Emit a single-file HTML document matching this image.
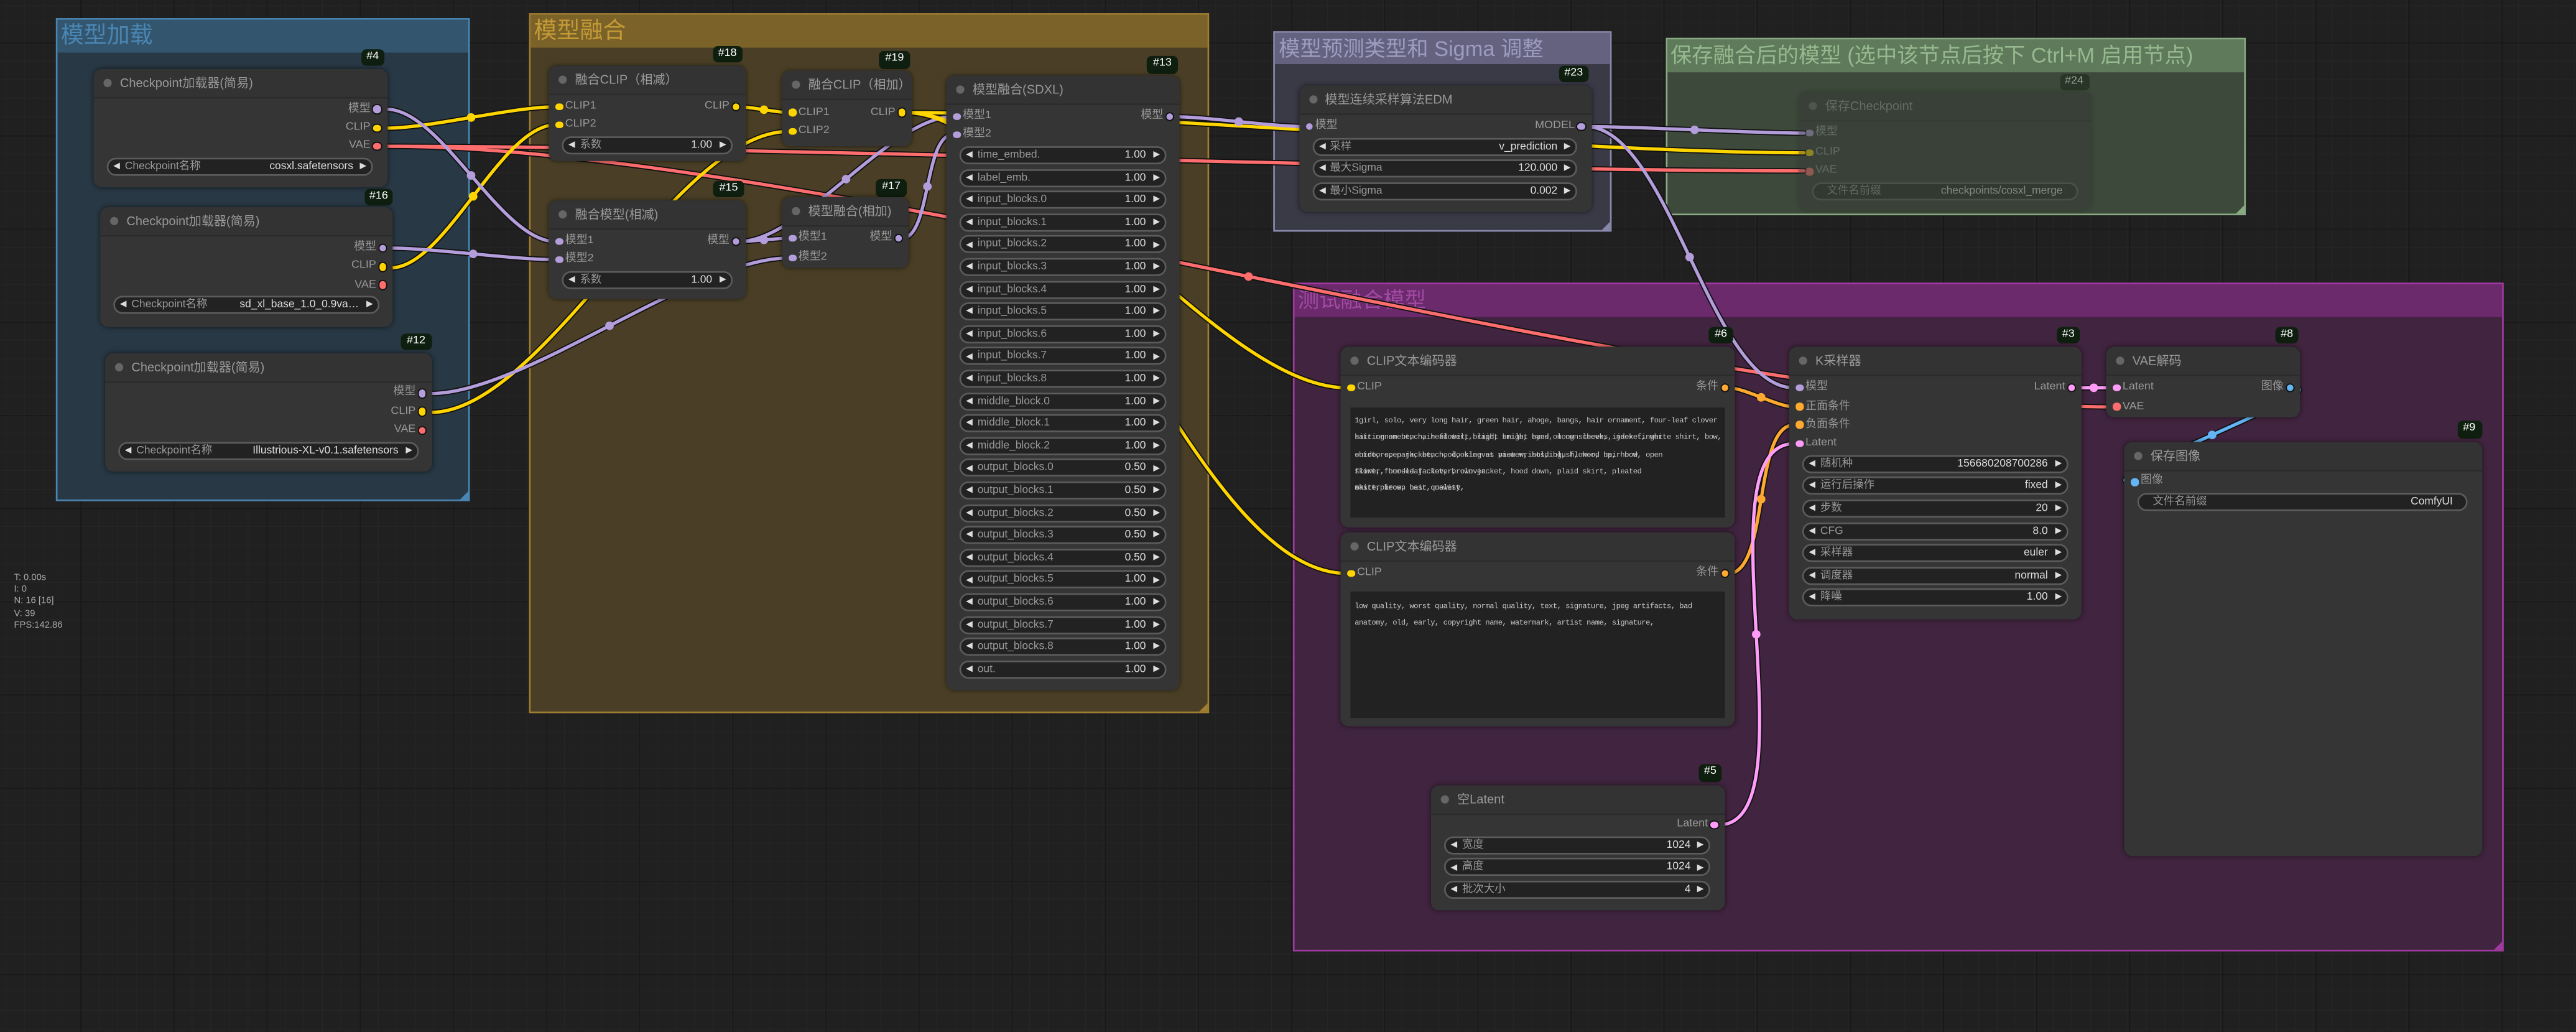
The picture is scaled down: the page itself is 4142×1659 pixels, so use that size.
<!DOCTYPE html>
<html><head><meta charset="utf-8">
<style>
html,body{margin:0;padding:0;width:4142px;height:1659px;overflow:hidden;background:#202020}
#s{position:absolute;left:0;top:0;width:1568px;height:628px;transform:scale(2.641582);transform-origin:0 0;font-family:"Liberation Sans","Noto Sans CJK SC",sans-serif;
background-color:#202020;
background-image:linear-gradient(#191919 .8px,transparent .8px),linear-gradient(90deg,#191919 .8px,transparent .8px),linear-gradient(#262626 .4px,transparent .4px),linear-gradient(90deg,#262626 .4px,transparent .4px);
background-size:56.7px 56.7px,56.7px 56.7px,11.34px 11.34px,11.34px 11.34px;background-position:48.8px 25.7px;}
.g{position:absolute;box-sizing:border-box;border:.7px solid}
.g .gh{position:absolute;left:0;right:0;top:0;height:19.5px}
.g .gt{position:absolute;left:2px;top:0;line-height:19.5px;font-size:14px;white-space:nowrap}
.g .tri{position:absolute;right:0;bottom:0;width:0;height:0;border-left:5px solid transparent;border-bottom:5px solid}
.n{position:absolute;background:#353535;border-radius:5px;box-shadow:0 0 3px rgba(0,0,0,.55)}
.n .h{position:absolute;left:0;right:0;top:0;height:17px;border-bottom:1px solid #2b2b2b;border-radius:5px 5px 0 0;background:#333}
.n .h:before{content:'';position:absolute;left:6px;top:6px;width:5px;height:5px;border-radius:50%;background:#666}
.n .h span{position:absolute;left:16px;top:0;line-height:17px;font-size:7.6px;color:#999;white-space:nowrap}
.sl{position:absolute;left:0;right:0;height:8px;font-size:6.8px;line-height:8px;color:#999;white-space:nowrap}
.sl b{position:absolute;top:1.75px;width:4.5px;height:4.5px;border-radius:50%}
.sl.i b{left:4px}.sl.i span{position:absolute;left:10px}
.sl.o b{right:4px;box-shadow:0 0 0 .7px #111}.sl.o span{position:absolute;right:10px}
.w{position:absolute;left:8px;right:8.5px;height:11px;box-sizing:border-box;background:#222;border:.6px solid #5c5c5c;border-radius:6px;font-size:6.6px;line-height:10px;color:#999;white-space:nowrap}
.w:before{content:'';position:absolute;left:3px;top:2.2px;border-right:4px solid #ddd;border-top:2.8px solid transparent;border-bottom:2.8px solid transparent}
.w:after{content:'';position:absolute;right:3px;top:2.2px;border-left:4px solid #ddd;border-top:2.8px solid transparent;border-bottom:2.8px solid transparent}
.w .l{position:absolute;left:10px}.w .v{position:absolute;right:11px;color:#ddd}
.w.ns:before,.w.ns:after{display:none}
.w.ns .l{left:8px}.w.ns .v{right:8px}
.b{position:absolute;background:#0f1f0f;color:#fff;font-size:6.8px;line-height:10.5px;height:10.5px;border-radius:3px;text-align:center}
.ta{position:absolute;left:5.6px;right:6px;background:#222;overflow:hidden}
.ta div{position:absolute;left:3px;font-family:"Liberation Mono",monospace;font-size:4.6px;letter-spacing:-.19px;color:#c8c8c8;white-space:nowrap}
.st{position:absolute;left:8.5px;font-size:5.6px;color:#a8a8a8;line-height:7.2px}
</style></head><body>
<div id="s">

<!-- groups -->
<div class="g" style="left:34px;top:11px;width:251.5px;height:294px;background:#283844;border-color:#4a86b4">
 <div class="gh" style="background:#33566e"></div><div class="gt" style="color:#4a86b4">模型加载</div><div class="tri" style="border-bottom-color:#4a86b4"></div></div>
<div class="g" style="left:322px;top:8.4px;width:414px;height:426px;background:#4a3f26;border-color:#a07e30">
 <div class="gh" style="background:#7a6229"></div><div class="gt" style="color:#c49a36">模型融合</div><div class="tri" style="border-bottom-color:#a07e30"></div></div>
<div class="g" style="left:775.4px;top:18.6px;width:205.5px;height:122.4px;background:#3a3a47;border-color:#8888aa">
 <div class="gh" style="background:#64627f"></div><div class="gt" style="color:#9d9cc0;font-size:13px">模型预测类型和 Sigma 调整</div><div class="tri" style="border-bottom-color:#8888aa"></div></div>
<div class="g" style="left:1013.8px;top:23.4px;width:353.5px;height:107.2px;background:#3d4a3b;border-color:#8aaa84">
 <div class="gh" style="background:#5e7a5a"></div><div class="gt" style="color:#96b98f;font-size:13px">保存融合后的模型 (选中该节点后按下 Ctrl+M 启用节点)</div><div class="tri" style="border-bottom-color:#8aaa84"></div></div>
<div class="g" style="left:787px;top:172px;width:737px;height:407px;background:#41243f;border-color:#a03aa0">
 <div class="gh" style="background:#6b2a6b"></div><div class="gt" style="color:#a04aa2;font-size:13px">测试融合模型</div><div class="tri" style="border-bottom-color:#a03aa0"></div></div>

<!-- links -->
<svg style="position:absolute;left:0;top:0" width="1568" height="628" viewBox="0 0 1568 628" fill="none">
<g stroke="#111" stroke-width="3.4" stroke-linecap="round">
<path d="M235.5,78 C261.5,78 312,65 338,65"/><path d="M238,163 C271,163 305,76 338,76"/>
<path d="M235.5,66.5 C268.5,66.5 305,147 338,147"/><path d="M238,151 C263,151 313,158 338,158"/>
<path d="M262,251 C331,251 411,80 480,80"/><path d="M262,239.5 C320,239.5 422,157 480,157"/>
<path d="M450,65 C457.5,65 472.5,68.5 480,68.5"/><path d="M450,147 C457.5,147 472.5,145 480,145"/>
<path d="M549,145 C566.5,145 562.5,82 580,82"/><path d="M450,147 C487.6,147 542.4,71 580,71"/>
<path d="M551,68.5 C688,68.5 961,93 1098,93"/><path d="M551,68.5 C630,68.5 741,236 820,236"/>
<path d="M551,68.5 C648,68.5 723,349 820,349"/><path d="M714,71 C734,71 774,77 794,77"/>
<path d="M965,77 C998,77 1065,81 1098,81"/><path d="M965,77 C1016,77 1041,236 1092,236"/>
<path d="M235.5,89 C451.5,89 882,104 1098,104"/><path d="M235.5,89 C500.5,89 1020,247.6 1285,247.6"/>
<path d="M1052,236 C1062,236 1082,247.6 1092,247.6"/><path d="M1052,349 C1077,349 1067,258.6 1092,258.6"/>
<path d="M1046,502 C1105,502 1033,270 1092,270"/><path d="M1263,236 C1270,236 1279,236 1286,236"/>
<path d="M1396,236 C1424.6,236 1268.4,293.4 1297,293.4"/>
</g>
<g stroke-width="2" stroke-linecap="round">
<path stroke="#ff6e6e" d="M235.5,89 C451.5,89 882,104 1098,104"/><path stroke="#ff6e6e" d="M235.5,89 C500.5,89 1020,247.6 1285,247.6"/>
<path stroke="#ffd500" d="M235.5,78 C261.5,78 312,65 338,65"/><path stroke="#ffd500" d="M238,163 C271,163 305,76 338,76"/>
<path stroke="#b39ddb" d="M235.5,66.5 C268.5,66.5 305,147 338,147"/><path stroke="#b39ddb" d="M238,151 C263,151 313,158 338,158"/>
<path stroke="#ffd500" d="M262,251 C331,251 411,80 480,80"/><path stroke="#b39ddb" d="M262,239.5 C320,239.5 422,157 480,157"/>
<path stroke="#ffd500" d="M450,65 C457.5,65 472.5,68.5 480,68.5"/><path stroke="#b39ddb" d="M450,147 C457.5,147 472.5,145 480,145"/>
<path stroke="#b39ddb" d="M549,145 C566.5,145 562.5,82 580,82"/><path stroke="#b39ddb" d="M450,147 C487.6,147 542.4,71 580,71"/>
<path stroke="#ffd500" d="M551,68.5 C688,68.5 961,93 1098,93"/><path stroke="#ffd500" d="M551,68.5 C630,68.5 741,236 820,236"/>
<path stroke="#ffd500" d="M551,68.5 C648,68.5 723,349 820,349"/><path stroke="#b39ddb" d="M714,71 C734,71 774,77 794,77"/>
<path stroke="#b39ddb" d="M965,77 C998,77 1065,81 1098,81"/><path stroke="#b39ddb" d="M965,77 C1016,77 1041,236 1092,236"/>
<path stroke="#ffa931" d="M1052,236 C1062,236 1082,247.6 1092,247.6"/><path stroke="#ffa931" d="M1052,349 C1077,349 1067,258.6 1092,258.6"/>
<path stroke="#ff9cf9" d="M1046,502 C1105,502 1033,270 1092,270"/><path stroke="#ff9cf9" d="M1263,236 C1270,236 1279,236 1286,236"/>
<path stroke="#64b5f6" d="M1396,236 C1424.6,236 1268.4,293.4 1297,293.4"/>
</g>
<g>
<circle cx="286.75" cy="71.5" r="2.6" fill="#ffd500"/><circle cx="288" cy="119.5" r="2.6" fill="#ffd500"/>
<circle cx="286.75" cy="106.75" r="2.6" fill="#b39ddb"/><circle cx="288" cy="154.5" r="2.6" fill="#b39ddb"/>
<circle cx="371" cy="165.5" r="2.6" fill="#ffd500"/><circle cx="371" cy="198.25" r="2.6" fill="#b39ddb"/>
<circle cx="465" cy="66.75" r="2.6" fill="#ffd500"/><circle cx="465" cy="146" r="2.6" fill="#b39ddb"/>
<circle cx="564.5" cy="113.5" r="2.6" fill="#b39ddb"/><circle cx="515" cy="109" r="2.6" fill="#b39ddb"/>
<circle cx="754" cy="74" r="2.6" fill="#b39ddb"/><circle cx="1031.5" cy="79" r="2.6" fill="#b39ddb"/>
<circle cx="1028.5" cy="156.5" r="2.6" fill="#b39ddb"/><circle cx="666.75" cy="96.5" r="2.6" fill="#ff6e6e"/>
<circle cx="760" cy="168.3" r="2.6" fill="#ff6e6e"/><circle cx="1072" cy="241.8" r="2.6" fill="#ffa931"/>
<circle cx="1072" cy="303.8" r="2.6" fill="#ffa931"/><circle cx="1069" cy="386" r="2.6" fill="#ff9cf9"/>
<circle cx="1274.5" cy="236" r="2.6" fill="#ff9cf9"/><circle cx="1346.5" cy="264.7" r="2.6" fill="#64b5f6"/>
</g>
</svg>

<!-- badges -->
<div class="b" style="left:219.6px;top:29.5px;width:14.5px">#4</div>
<div class="b" style="left:222px;top:114.5px;width:17px">#16</div>
<div class="b" style="left:244px;top:202.5px;width:18.5px">#12</div>
<div class="b" style="left:433.5px;top:27.5px;width:18.5px">#18</div>
<div class="b" style="left:535px;top:31px;width:19px">#19</div>
<div class="b" style="left:434px;top:109.5px;width:19px">#15</div>
<div class="b" style="left:533px;top:109px;width:19px">#17</div>
<div class="b" style="left:698px;top:34px;width:19px">#13</div>
<div class="b" style="left:948.6px;top:39.5px;width:18.5px">#23</div>
<div class="b" style="left:1253.5px;top:44.5px;width:18px;opacity:.45">#24</div>
<div class="b" style="left:1040px;top:198.5px;width:15px">#6</div>
<div class="b" style="left:1252px;top:198.7px;width:14px">#3</div>
<div class="b" style="left:1385px;top:198.7px;width:14px">#8</div>
<div class="b" style="left:1495.5px;top:256px;width:15px">#9</div>
<div class="b" style="left:1033.7px;top:465px;width:14.6px">#5</div>

<!-- #4 -->
<div class="n" style="left:57px;top:41.5px;width:178.5px;height:72.5px">
 <div class="h"><span>Checkpoint加载器(简易)</span></div>
 <div class="sl o" style="top:21px"><span>模型</span><b style="background:#b39ddb"></b></div>
 <div class="sl o" style="top:32.3px"><span>CLIP</span><b style="background:#ffd500"></b></div>
 <div class="sl o" style="top:43.6px"><span>VAE</span><b style="background:#ff6e6e"></b></div>
 <div class="w" style="top:54.3px"><span class="l">Checkpoint名称</span><span class="v">cosxl.safetensors</span></div>
</div>
<!-- #16 -->
<div class="n" style="left:61px;top:126px;width:178px;height:72.5px">
 <div class="h"><span>Checkpoint加载器(简易)</span></div>
 <div class="sl o" style="top:21px"><span>模型</span><b style="background:#b39ddb"></b></div>
 <div class="sl o" style="top:32.3px"><span>CLIP</span><b style="background:#ffd500"></b></div>
 <div class="sl o" style="top:43.6px"><span>VAE</span><b style="background:#ff6e6e"></b></div>
 <div class="w" style="top:54.3px"><span class="l">Checkpoint名称</span><span class="v">sd_xl_base_1.0_0.9va…</span></div>
</div>
<!-- #12 -->
<div class="n" style="left:64px;top:214.7px;width:199px;height:72.3px">
 <div class="h"><span>Checkpoint加载器(简易)</span></div>
 <div class="sl o" style="top:20.6px"><span>模型</span><b style="background:#b39ddb"></b></div>
 <div class="sl o" style="top:32px"><span>CLIP</span><b style="background:#ffd500"></b></div>
 <div class="sl o" style="top:43.3px"><span>VAE</span><b style="background:#ff6e6e"></b></div>
 <div class="w" style="top:54.3px"><span class="l">Checkpoint名称</span><span class="v">Illustrious-XL-v0.1.safetensors</span></div>
</div>

<!-- #18 -->
<div class="n" style="left:334px;top:40px;width:120px;height:58px">
 <div class="h"><span>融合CLIP（相减）</span></div>
 <div class="sl i" style="top:21px"><b style="background:#ffd500"></b><span>CLIP1</span></div>
 <div class="sl i" style="top:32px"><b style="background:#ffd500"></b><span>CLIP2</span></div>
 <div class="sl o" style="top:21px"><span>CLIP</span><b style="background:#ffd500"></b></div>
 <div class="w" style="top:42.5px"><span class="l">系数</span><span class="v">1.00</span></div>
</div>
<!-- #19 -->
<div class="n" style="left:476px;top:43px;width:79px;height:46px">
 <div class="h"><span>融合CLIP（相加）</span></div>
 <div class="sl i" style="top:21.5px"><b style="background:#ffd500"></b><span>CLIP1</span></div>
 <div class="sl i" style="top:33px"><b style="background:#ffd500"></b><span>CLIP2</span></div>
 <div class="sl o" style="top:21.5px"><span>CLIP</span><b style="background:#ffd500"></b></div>
</div>
<!-- #15 -->
<div class="n" style="left:334px;top:122px;width:120px;height:60px">
 <div class="h"><span>融合模型(相减)</span></div>
 <div class="sl i" style="top:21px"><b style="background:#b39ddb"></b><span>模型1</span></div>
 <div class="sl i" style="top:32px"><b style="background:#b39ddb"></b><span>模型2</span></div>
 <div class="sl o" style="top:21px"><span>模型</span><b style="background:#b39ddb"></b></div>
 <div class="w" style="top:42.5px"><span class="l">系数</span><span class="v">1.00</span></div>
</div>
<!-- #17 -->
<div class="n" style="left:476px;top:120px;width:77px;height:43px">
 <div class="h"><span>模型融合(相加)</span></div>
 <div class="sl i" style="top:21px"><b style="background:#b39ddb"></b><span>模型1</span></div>
 <div class="sl i" style="top:33px"><b style="background:#b39ddb"></b><span>模型2</span></div>
 <div class="sl o" style="top:21px"><span>模型</span><b style="background:#b39ddb"></b></div>
</div>
<!-- #13 -->
<div class="n" style="left:576px;top:46px;width:142px;height:374px">
 <div class="h"><span>模型融合(SDXL)</span></div>
 <div class="sl i" style="top:21px"><b style="background:#b39ddb"></b><span>模型1</span></div>
 <div class="sl i" style="top:32.2px"><b style="background:#b39ddb"></b><span>模型2</span></div>
 <div class="sl o" style="top:21px"><span>模型</span><b style="background:#b39ddb"></b></div>
 <div class="w" style="top:43px"><span class="l">time_embed.</span><span class="v">1.00</span></div>
 <div class="w" style="top:56.6px"><span class="l">label_emb.</span><span class="v">1.00</span></div>
 <div class="w" style="top:70.2px"><span class="l">input_blocks.0</span><span class="v">1.00</span></div>
 <div class="w" style="top:83.8px"><span class="l">input_blocks.1</span><span class="v">1.00</span></div>
 <div class="w" style="top:97.4px"><span class="l">input_blocks.2</span><span class="v">1.00</span></div>
 <div class="w" style="top:111px"><span class="l">input_blocks.3</span><span class="v">1.00</span></div>
 <div class="w" style="top:124.6px"><span class="l">input_blocks.4</span><span class="v">1.00</span></div>
 <div class="w" style="top:138.2px"><span class="l">input_blocks.5</span><span class="v">1.00</span></div>
 <div class="w" style="top:151.8px"><span class="l">input_blocks.6</span><span class="v">1.00</span></div>
 <div class="w" style="top:165.4px"><span class="l">input_blocks.7</span><span class="v">1.00</span></div>
 <div class="w" style="top:179px"><span class="l">input_blocks.8</span><span class="v">1.00</span></div>
 <div class="w" style="top:192.6px"><span class="l">middle_block.0</span><span class="v">1.00</span></div>
 <div class="w" style="top:206.2px"><span class="l">middle_block.1</span><span class="v">1.00</span></div>
 <div class="w" style="top:219.8px"><span class="l">middle_block.2</span><span class="v">1.00</span></div>
 <div class="w" style="top:233.4px"><span class="l">output_blocks.0</span><span class="v">0.50</span></div>
 <div class="w" style="top:247px"><span class="l">output_blocks.1</span><span class="v">0.50</span></div>
 <div class="w" style="top:260.6px"><span class="l">output_blocks.2</span><span class="v">0.50</span></div>
 <div class="w" style="top:274.2px"><span class="l">output_blocks.3</span><span class="v">0.50</span></div>
 <div class="w" style="top:287.8px"><span class="l">output_blocks.4</span><span class="v">0.50</span></div>
 <div class="w" style="top:301.4px"><span class="l">output_blocks.5</span><span class="v">1.00</span></div>
 <div class="w" style="top:315px"><span class="l">output_blocks.6</span><span class="v">1.00</span></div>
 <div class="w" style="top:328.6px"><span class="l">output_blocks.7</span><span class="v">1.00</span></div>
 <div class="w" style="top:342.2px"><span class="l">output_blocks.8</span><span class="v">1.00</span></div>
 <div class="w" style="top:355.8px"><span class="l">out.</span><span class="v">1.00</span></div>
</div>

<!-- #23 -->
<div class="n" style="left:790.5px;top:51.7px;width:178px;height:77px">
 <div class="h"><span>模型连续采样算法EDM</span></div>
 <div class="sl i" style="top:21.3px"><b style="background:#b39ddb"></b><span>模型</span></div>
 <div class="sl o" style="top:21.3px"><span>MODEL</span><b style="background:#b39ddb"></b></div>
 <div class="w" style="top:31.9px"><span class="l">采样</span><span class="v">v_prediction</span></div>
 <div class="w" style="top:45.6px"><span class="l">最大Sigma</span><span class="v">120.000</span></div>
 <div class="w" style="top:59.2px"><span class="l">最小Sigma</span><span class="v">0.002</span></div>
</div>
<!-- #24 -->
<div class="n" style="left:1095px;top:56.4px;width:178px;height:72px;opacity:.42">
 <div class="h"><span>保存Checkpoint</span></div>
 <div class="sl i" style="top:20.6px"><b style="background:#b39ddb"></b><span>模型</span></div>
 <div class="sl i" style="top:32.6px"><b style="background:#ffd500"></b><span>CLIP</span></div>
 <div class="sl i" style="top:44px"><b style="background:#ff6e6e"></b><span>VAE</span></div>
 <div class="w ns" style="top:54.4px"><span class="l">文件名前缀</span><span class="v">checkpoints/cosxl_merge</span></div>
</div>

<!-- #6 -->
<div class="n" style="left:816px;top:211px;width:240px;height:110px">
 <div class="h"><span>CLIP文本编码器</span></div>
 <div class="sl i" style="top:21px"><b style="background:#ffd500"></b><span>CLIP</span></div>
 <div class="sl o" style="top:21px"><span>条件</span><b style="background:#ffa931"></b></div>
 <div class="ta" style="top:37.3px;height:66.7px">
  <div style="top:6px">1girl, solo, very long hair, green hair, ahoge, bangs, hair ornament, four-leaf clover</div>
  <div style="top:16.2px">hair ornament, hair flower, braid, bright eyes, long sleeves, jacket, white shirt, bow, dress</div>
  <div style="top:16.2px">sitting on bench, head tilt, light smile, hand on own cheek, index finger</div>
  <div style="top:26.4px">shirt, open jacket, hood, sleeves past wrists, blush, hood up, hood, open</div>
  <div style="top:26.4px">outdoors, park, bench, looking at viewer, holding, flower, hair bow</div>
  <div style="top:36.6px">flower, hooded jacket, brown jacket, hood down, plaid skirt, pleated</div>
  <div style="top:36.6px">skirt, four-leaf clover, clover</div>
  <div style="top:46.8px">masterpiece, best quality,</div>
  <div style="top:46.8px">skirt, brown hair, newest,</div>
 </div>
</div>
<!-- #7 -->
<div class="n" style="left:816px;top:324px;width:240px;height:118px">
 <div class="h"><span>CLIP文本编码器</span></div>
 <div class="sl i" style="top:21px"><b style="background:#ffd500"></b><span>CLIP</span></div>
 <div class="sl o" style="top:21px"><span>条件</span><b style="background:#ffa931"></b></div>
 <div class="ta" style="top:36px;height:77px">
  <div style="top:7px">low quality, worst quality, normal quality, text, signature, jpeg artifacts, bad</div>
  <div style="top:17.2px">anatomy, old, early, copyright name, watermark, artist name, signature,</div>
 </div>
</div>
<!-- #5 -->
<div class="n" style="left:871px;top:477.6px;width:178.6px;height:76.4px">
 <div class="h"><span>空Latent</span></div>
 <div class="sl o" style="top:20.6px"><span>Latent</span><b style="background:#ff9cf9"></b></div>
 <div class="w" style="top:31.2px"><span class="l">宽度</span><span class="v">1024</span></div>
 <div class="w" style="top:44.8px"><span class="l">高度</span><span class="v">1024</span></div>
 <div class="w" style="top:58.4px"><span class="l">批次大小</span><span class="v">4</span></div>
</div>
<!-- #3 -->
<div class="n" style="left:1089px;top:211px;width:178px;height:166px">
 <div class="h"><span>K采样器</span></div>
 <div class="sl i" style="top:21px"><b style="background:#b39ddb"></b><span>模型</span></div>
 <div class="sl i" style="top:32.6px"><b style="background:#ffa931"></b><span>正面条件</span></div>
 <div class="sl i" style="top:43.6px"><b style="background:#ffa931"></b><span>负面条件</span></div>
 <div class="sl i" style="top:55px"><b style="background:#ff9cf9"></b><span>Latent</span></div>
 <div class="sl o" style="top:21px"><span>Latent</span><b style="background:#ff9cf9"></b></div>
 <div class="w" style="top:65.7px"><span class="l">随机种</span><span class="v">156680208700286</span></div>
 <div class="w" style="top:79.3px"><span class="l">运行后操作</span><span class="v">fixed</span></div>
 <div class="w" style="top:92.9px"><span class="l">步数</span><span class="v">20</span></div>
 <div class="w" style="top:106.5px"><span class="l">CFG</span><span class="v">8.0</span></div>
 <div class="w" style="top:120.1px"><span class="l">采样器</span><span class="v">euler</span></div>
 <div class="w" style="top:133.7px"><span class="l">调度器</span><span class="v">normal</span></div>
 <div class="w" style="top:147.3px"><span class="l">降噪</span><span class="v">1.00</span></div>
</div>
<!-- #8 -->
<div class="n" style="left:1282px;top:211px;width:118px;height:43px">
 <div class="h"><span>VAE解码</span></div>
 <div class="sl i" style="top:21px"><b style="background:#ff9cf9"></b><span>Latent</span></div>
 <div class="sl i" style="top:32.6px"><b style="background:#ff6e6e"></b><span>VAE</span></div>
 <div class="sl o" style="top:21px"><span>图像</span><b style="background:#64b5f6"></b></div>
</div>
<!-- #9 -->
<div class="n" style="left:1293px;top:269px;width:218px;height:252px">
 <div class="h"><span>保存图像</span></div>
 <div class="sl i" style="top:20.4px"><b style="background:#64b5f6"></b><span>图像</span></div>
 <div class="w ns" style="top:31px;left:8.4px;right:9px"><span class="l">文件名前缀</span><span class="v">ComfyUI</span></div>
</div>

<!-- stats -->
<div class="st" style="top:349px">T: 0.00s<br>I: 0<br>N: 16 [16]<br>V: 39<br>FPS:142.86</div>

</div>
</body></html>
